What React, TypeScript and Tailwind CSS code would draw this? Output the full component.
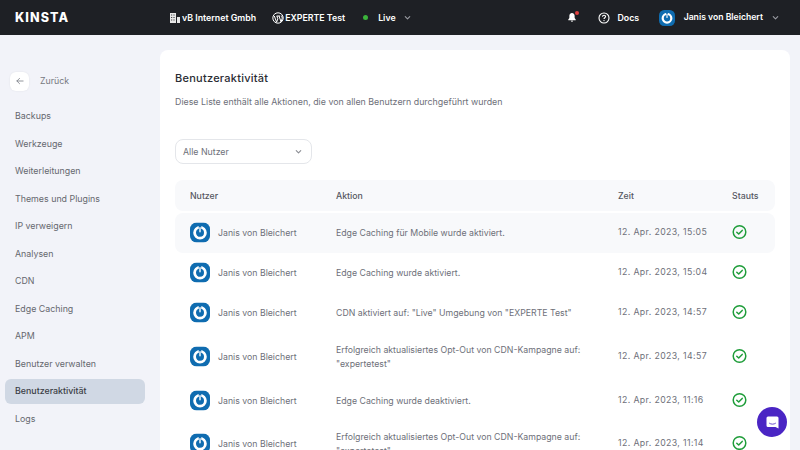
const nav = ["Backups","Werkzeuge","Weiterleitungen","Themes und Plugins","IP verweigern","Analysen","CDN","Edge Caching","APM","Benutzer verwalten","Benutzeraktivität","Logs"];
const rows = [
  {a:"Edge Caching für Mobile wurde aktiviert.",t:"12. Apr. 2023, 15:05",h:"h-[40px]",bg:"bg-[#f8f9fb]"},
  {a:"Edge Caching wurde aktiviert.",t:"12. Apr. 2023, 15:04",h:"h-[40px]",bg:""},
  {a:"CDN aktiviert auf: \"Live\" Umgebung von \"EXPERTE Test\"",t:"12. Apr. 2023, 14:57",h:"h-[40px]",bg:""},
  {a:"Erfolgreich aktualisiertes Opt-Out von CDN-Kampagne auf: \"expertetest\"",t:"12. Apr. 2023, 14:57",h:"h-[48px]",bg:""},
  {a:"Edge Caching wurde deaktiviert.",t:"12. Apr. 2023, 11:16",h:"h-[40px]",bg:""},
  {a:"Erfolgreich aktualisiertes Opt-Out von CDN-Kampagne auf: \"expertetest\"",t:"12. Apr. 2023, 11:14",h:"h-[46px]",bg:""},
];
function Avatar({s}:{s:number}){return(
  <svg width={s} height={s} viewBox="0 0 20 20" className="shrink-0">
    <rect width="20" height="20" rx="6.5" fill="#0f6cb0"/>
    <circle cx="10" cy="10.300" r="5.400" fill="none" stroke="#fff" strokeWidth="2.800"/>
    <rect x="8.800" y="2" width="2.400" height="5.500" fill="#0f6cb0"/>
    <rect x="9.300" y="4.500" width="1.400" height="5.500" rx=".7" fill="#fff"/>
  </svg>);}
function Check(){return(
  <svg width="15" height="15" viewBox="0 0 15 15" fill="none" className="block"><circle cx="7.5" cy="7.5" r="6.300" stroke="#1f9d3a" strokeWidth="1.500"/><path d="M4.800 7.700 6.700 9.500 10.200 5.900" stroke="#1f9d3a" strokeWidth="1.500" strokeLinecap="round" strokeLinejoin="round"/></svg>);}
function Chev({c,s=9}:{c:string;s?:number}){return(
  <svg width={s} height={s} viewBox="0 0 10 10" fill="none"><path d="M2.500 4 5 6.500 7.500 4" stroke={c} strokeWidth="1.200" strokeLinecap="round" strokeLinejoin="round"/></svg>);}
export default function App(){return(
  <div className="w-[800px] h-[450px] overflow-hidden bg-[#f2f3f9] font-['Inter',sans-serif] relative">
    <header className="h-[35px] bg-[#1e2025] flex items-center text-white text-[8.8px] font-semibold">
      <div className="w-[169px] pl-[15px] pt-[2px] font-extrabold text-[12.500px] tracking-[1.1px] leading-none">KINSTA</div>
      <svg width="12" height="12" viewBox="0 0 12 12" fill="#e8e8e8"><path d="M1 1h6v10H1zM8 5h3v6H8z"/><path d="M2.200 2.500h1v1h-1zM4.500 2.500h1v1h-1zM2.200 5h1v1h-1zM4.500 5h1v1h-1zM2.200 7.500h1v1h-1zM4.500 7.500h1v1h-1z" fill="#1e2025"/></svg>
      <span className="ml-[1px]">vB Internet Gmbh</span>
      <svg width="12" height="12" viewBox="0 0 12 12" className="ml-[16px]"><circle cx="6" cy="6" r="5.200" fill="none" stroke="#fff" strokeWidth="1"/><path d="M2.300 4 4.600 10.200 5.800 6.800 4.900 4M4.600 4h3.600M7 4l2.100 6 1-3.500c.2-1 0-1.800-.6-2.800" fill="none" stroke="#fff" strokeWidth="1"/></svg>
      <span className="ml-[1px]">EXPERTE Test</span>
      <span className="ml-[18px] w-[5px] h-[5px] rounded-full bg-[#3bb33b]"/>
      <span className="ml-[10px]">Live</span>
      <span className="ml-[7px] flex"><Chev c="#9a9ca3"/></span>
      <div className="ml-auto flex items-center">
        <span className="relative flex">
          <svg width="10" height="11" viewBox="0 0 11 12" fill="#fff"><path d="M5.500 1C3.600 1 2.600 2.500 2.600 4.200v2.300L1.400 8.300v.6h8.200v-.6L8.400 6.500V4.200C8.400 2.500 7.400 1 5.500 1zM4.300 9.600a1.200 1.200 0 0 0 2.400 0z"/></svg>
          <span className="absolute -top-[1px] -right-[2px] w-[4px] h-[4px] rounded-full bg-[#e0403f]"/>
        </span>
        <svg width="12" height="12" viewBox="0 0 12 12" fill="none" className="ml-[21px]"><circle cx="6" cy="6" r="5" stroke="#fff" strokeWidth="1.100"/><path d="M4.500 4.700c0-2 3.100-1.900 3.100-.1 0 1.100-1.600 1.200-1.600 2.400" stroke="#fff" strokeWidth="1.100" fill="none"/><circle cx="6" cy="8.600" r=".7" fill="#fff"/></svg>
        <span className="ml-[7px]">Docs</span>
        <span className="ml-[19.500px] flex"><Avatar s={16}/></span>
        <span className="ml-[9px] text-[8.650px]">Janis von Bleichert</span>
        <span className="ml-[8px] mr-[20px] flex"><Chev c="#9a9ca3"/></span>
      </div>
    </header>
    <div className="flex h-[415px]">
      <aside className="w-[160px] shrink-0 pt-[35px] pl-[5px] pr-[15px]">
        <div className="flex items-center pl-[5px] h-[22px] mb-[11.500px]">
          <span className="w-[19px] h-[19px] bg-white rounded-[6px] flex items-center justify-center shadow-[0_0_2px_rgba(0,0,0,0.08)]">
            <svg width="8" height="8" viewBox="0 0 9 9" fill="none"><path d="M8 4.500H1M4 1.500 1 4.500l3 3" stroke="#777b84" strokeWidth="0.9" strokeLinecap="round" strokeLinejoin="round"/></svg>
          </span>
          <span className="ml-[11px] text-[8.800px] text-[#777981]">Zurück</span>
        </div>
        <nav className="flex flex-col text-[8.850px] text-[#66686f]">
          {nav.map(n=>(
            <div key={n} className={"h-[25px] mb-[2.500px] flex items-center pl-[10px] rounded-[6px] "+(n==="Benutzeraktivität"?"bg-[#d0d8e4] text-[#3a3d45] font-medium":"")}>{n}</div>
          ))}
        </nav>
      </aside>
      <main className="w-[630px] mt-[15px] bg-white rounded-t-[8px] px-[15px] pt-[20px]">
        <h1 className="text-[11px] font-medium leading-[16px] text-[#2a2c33] tracking-[0.25px]">Benutzeraktivität</h1>
        <p className="mt-[9px] text-[8.850px] leading-[14px] text-[#6e7079]">Diese Liste enthält alle Aktionen, die von allen Benutzern durchgeführt wurden</p>
        <div className="mt-[30px] w-[137px] h-[25px] border border-[#e4e6ea] rounded-[8px] flex items-center justify-between pl-[7px] pr-[8px] text-[8.800px] text-[#6e7079]">
          <span>Alle Nutzer</span><Chev c="#8a8c93"/>
        </div>
        <div className="mt-[16px] w-[600px] text-[8.750px]">
          <div className="h-[31px] pt-[2px] bg-[#f8f9fb] rounded-[8px] mb-[2px] grid grid-cols-[146px_282px_114px_1fr] items-center pl-[15px] text-[#55575f] font-medium">
            <span>Nutzer</span><span>Aktion</span><span>Zeit</span><span>Stauts</span>
          </div>
          {rows.map((r,i)=>(
            <div key={i} className={"grid grid-cols-[146px_282px_114px_1fr] items-center pl-[15px] rounded-[8px] text-[#6e7079] "+r.h+" "+r.bg}>
              <span className="flex items-center gap-[8px]"><span className="-translate-y-[0.500px]"><Avatar s={20}/></span><span className="translate-y-[0.500px]">Janis von Bleichert</span></span>
              <span className="leading-[14px] pr-[8px]">{r.a}</span>
              <span className="tracking-[0.38px]">{r.t}</span>
              <span className="-translate-y-[1.500px]"><Check/></span>
            </div>
          ))}
        </div>
      </main>
    </div>
    <div className="absolute left-[757px] top-[407px] w-[30px] h-[30px] rounded-full bg-[#4a25c4] flex items-center justify-center">
      <svg width="15" height="15" viewBox="0 0 15 15"><path d="M3 1.500h9A1.500 1.500 0 0 1 13.500 3v10.500L10.500 12H3A1.500 1.500 0 0 1 1.500 10.500V3A1.500 1.500 0 0 1 3 1.500z" fill="#fff"/><path d="M4.500 8.300c1.800 1.200 4.200 1.200 6 0" stroke="#4a25c4" strokeWidth=".8" fill="none" strokeLinecap="round"/></svg>
    </div>
  </div>
);}
